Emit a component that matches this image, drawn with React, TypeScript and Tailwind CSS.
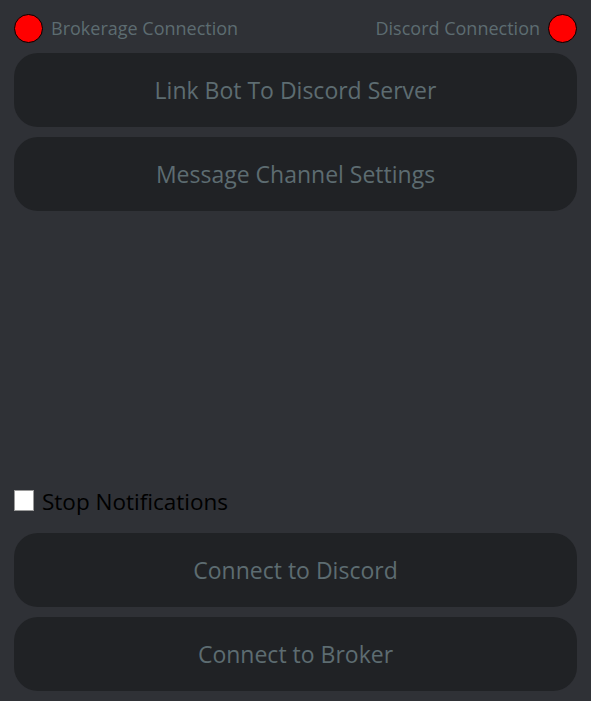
import React from "react";

function StatusDot() {
  return <span className="block w-[29px] h-[29px] rounded-full bg-[#ff0000] border border-black shrink-0" />;
}

function BigButton({ label }: { label: string }) {
  return (
    <button className="w-full h-[74px] rounded-[24px] bg-[#202225] text-[#5d6c71] text-[23px] flex items-center justify-center pt-[1px]">
      {label}
    </button>
  );
}

export default function App() {
  return (
    <div
      className="w-[591px] h-[701px] bg-[#2f3136] flex flex-col px-[14px] pt-[14px] pb-[10px]"
      style={{ fontFamily: '"Open Sans", "Noto Sans", sans-serif' }}
    >
      <div className="flex items-center justify-between h-[29px]">
        <div className="flex items-center gap-[8px]">
          <StatusDot />
          <span className="text-[18px] text-[#5d6c71]">Brokerage Connection</span>
        </div>
        <div className="flex items-center gap-[8px]">
          <span className="text-[18px] text-[#5d6c71]">Discord Connection</span>
          <StatusDot />
        </div>
      </div>
      <div className="flex flex-col gap-[10px] mt-[10px]">
        <BigButton label="Link Bot To Discord Server" />
        <BigButton label="Message Channel Settings" />
      </div>
      <div className="flex-1" />
      <label className="flex items-center gap-[8px] h-[24px] mb-[21px]">
        <span className="block w-[20px] h-[21px] bg-white border border-[#9a9a9a]" />
        <span className="text-[22.5px] text-black pt-[3px]">Stop Notifications</span>
      </label>
      <div className="flex flex-col gap-[10px]">
        <BigButton label="Connect to Discord" />
        <BigButton label="Connect to Broker" />
      </div>
    </div>
  );
}
